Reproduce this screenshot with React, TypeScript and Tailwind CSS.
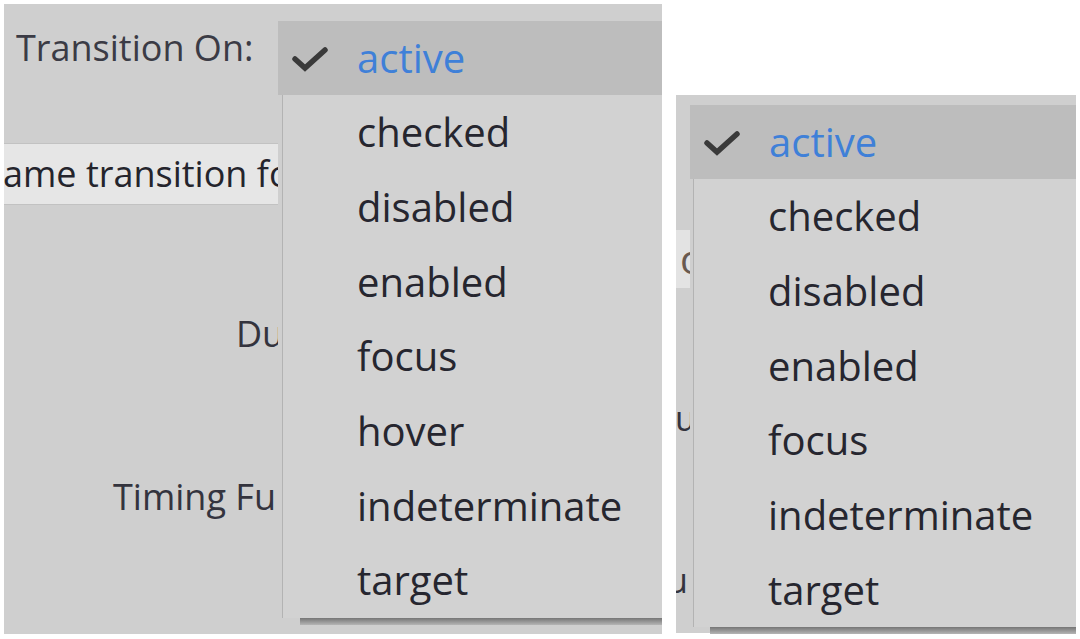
import React from "react";

const leftItems = ["checked", "disabled", "enabled", "focus", "hover", "indeterminate", "target"];
const rightItems = ["checked", "disabled", "enabled", "focus", "indeterminate", "target"];

const Check = () => (
    <svg width="36" height="27" viewBox="0 0 36 27" fill="none" className="shrink-0">
        <path d="M3 14 L13 23 L33 5" stroke="#3a3a3a" strokeWidth={5.5} strokeLinecap="round" strokeLinejoin="miter" />
    </svg>
);

// one open "Transition On" dropdown
const Menu = ({ items, width, bodyOffset, shadowOffset }: { items: string[]; width: string; bodyOffset: string; shadowOffset: string }) => (
    <div className={`${width} flex flex-col`}>
        {/* selected row */}
        <div className="h-[74px] bg-[#bdbdbd] flex items-center pl-[14px]">
            <Check />
            <span className="ml-[29px] text-[40px] leading-none text-[#3f80d8]">active</span>
        </div>
        <div className={`${bodyOffset} bg-[#d2d2d2] border-l border-[#b3b3b3]`}>
            {items.map((item) => (
                <div key={item} className="h-[74.7px] flex items-center pl-[74px] text-[40px] leading-none text-[#26262f] whitespace-nowrap">
                    {item}
                </div>
            ))}
        </div>
        <div className={`${shadowOffset} h-[7px] bg-gradient-to-b from-[#767676] to-[#b5b5b5]`}></div>
    </div>
);

export default function App() {
    return (
        <div className="w-[1080px] h-[639px] bg-white flex items-start overflow-hidden font-['Open_Sans',sans-serif]">
            {/* Left panel */}
            <div className="mt-[4px] ml-[4px] w-[658px] h-[630px] bg-[#cfcfcf] flex">
                <div className="w-[274px] flex flex-col overflow-hidden text-[#34343e]">
                    <div className="h-[139px] pt-[26px] pl-[12px] text-[36px] leading-none whitespace-nowrap text-[#3b3b45]">
                        Transition On:
                    </div>
                    <div className="h-[62px] bg-[#e6e6e6] border-y border-[#c2c2c2] flex items-center overflow-hidden">
                        <span className="-ml-[1px] text-[36px] leading-none whitespace-nowrap text-[#24242c]">ame transition for all</span>
                    </div>
                    <div className="mt-[111px] pl-[232px] text-[36px] leading-none whitespace-nowrap">Duration:</div>
                    <div className="mt-[127px] pl-[109px] text-[36px] leading-none whitespace-nowrap">Timing Function:</div>
                </div>
                <div className="pt-[17px]">
                    <Menu items={leftItems} width="w-[384px]" bodyOffset="ml-[4px]" shadowOffset="ml-[22px]" />
                </div>
            </div>

            {/* Right panel */}
            <div className="mt-[95px] ml-[14px] w-[400px] h-[538px] bg-[#cfcfcf] flex">
                <div className="w-[14px] flex flex-col overflow-hidden text-[#34343e]">
                    <div className="mt-[135px] h-[58px] bg-[#e3e3e3] flex items-center overflow-hidden">
                        <span className="ml-[4px] text-[40px] leading-none text-[#6a5a50]">o</span>
                    </div>
                    <div className="mt-[113px] -ml-[1px] text-[34px] leading-none">u</div>
                    <div className="mt-[128px] -ml-[9px] text-[34px] leading-none">u</div>
                </div>
                <div className="pt-[10px]">
                    <Menu items={rightItems} width="w-[386px]" bodyOffset="ml-[3px]" shadowOffset="ml-[20px]" />
                </div>
            </div>
        </div>
    );
}
